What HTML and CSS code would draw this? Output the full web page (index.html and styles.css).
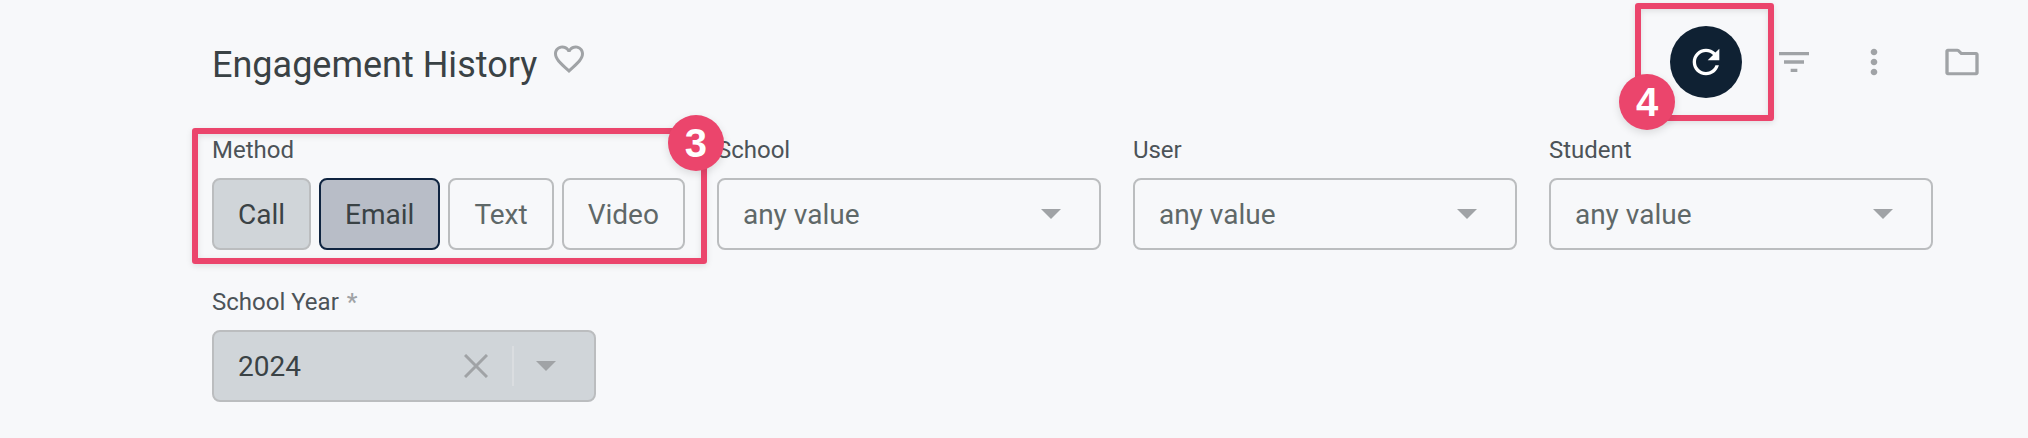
FILE: index.html
```html
<!DOCTYPE html>
<html lang="en">
<head>
  <meta charset="UTF-8">
  <meta name="viewport" content="width=device-width, initial-scale=1">
  <title>Engagement History</title>
  <link rel="stylesheet" href="styles.css">
</head>
<body>

<header class="page-header">
  <div class="title">
    <h1>Engagement History</h1>
    <button class="favorite" type="button" aria-label="Add to favorites">
      <svg viewBox="0 0 24 24"><path d="M16.500 3c-1.740 0-3.410.81-4.500 2.090C10.910 3.810 9.240 3 7.500 3 4.420 3 2 5.420 2 8.500c0 3.780 3.400 6.860 8.550 11.540L12 21.350l1.450-1.320C18.600 15.360 22 12.280 22 8.500 22 5.420 19.580 3 16.500 3zm-4.400 15.550l-.1.100-.1-.1C7.140 14.240 4 11.390 4 8.500 4 6.500 5.500 5 7.500 5c1.540 0 3.040.99 3.570 2.360h1.870C13.460 5.990 14.960 5 16.500 5c2 0 3.500 1.500 3.500 3.500 0 2.890-3.140 5.740-7.900 10.050z"/></svg>
    </button>
  </div>

  <div class="toolbar">
    <div class="step-area step-refresh">
      <button class="icon-button refresh" type="button" aria-label="Refresh">
        <svg viewBox="0 0 24 24"><path d="M17.650 6.350C16.200 4.900 14.210 4 12 4c-4.420 0-7.990 3.580-7.990 8s3.570 8 7.990 8c3.730 0 6.840-2.550 7.730-6h-2.080c-.82 2.330-3.040 4-5.650 4-3.310 0-6-2.690-6-6s2.690-6 6-6c1.660 0 3.140.69 4.220 1.780L13 11h7V4l-2.350 2.350z"/></svg>
      </button>
      <span class="step-frame"></span>
      <span class="step-number">4</span>
    </div>
    <button class="icon-button filter" type="button" aria-label="Filters">
      <svg viewBox="0 0 24 24"><path d="M10 18h4v-2h-4v2zM3 6v2h18V6H3zm3 7h12v-2H6v2z"/></svg>
    </button>
    <button class="icon-button more" type="button" aria-label="More actions">
      <svg viewBox="0 0 24 24"><path d="M12 8c1.100 0 2-.9 2-2s-.9-2-2-2-2 .9-2 2 .9 2 2 2zm0 2c-1.100 0-2 .9-2 2s.9 2 2 2 2-.9 2-2-.9-2-2-2zm0 6c-1.100 0-2 .9-2 2s.9 2 2 2 2-.9 2-2-.9-2-2-2z"/></svg>
    </button>
    <button class="icon-button folder" type="button" aria-label="Open folder">
      <svg viewBox="0 0 24 24"><path d="M3.500 4C2.700 4 2 4.700 2 5.500v13c0 .8.700 1.500 1.500 1.500h17c.8 0 1.500-.7 1.500-1.500v-11c0-.8-.7-1.500-1.500-1.500H12l-1.700-1.600C10 4.100 9.600 4 9.200 4H3.500zM4 5.800h5.200l2 2H20v10.400H4V5.800z"/></svg>
    </button>
  </div>
</header>

<main class="filters">
  <div class="field step-area step-method" role="group" aria-labelledby="method-label">
    <span class="label" id="method-label">Method</span>
    <div class="options">
      <button class="option selected" type="button" aria-pressed="true">Call</button>
      <button class="option selected active" type="button" aria-pressed="true">Email</button>
      <button class="option" type="button" aria-pressed="false">Text</button>
      <button class="option" type="button" aria-pressed="false">Video</button>
    </div>
    <span class="step-frame"></span>
    <span class="step-number">3</span>
  </div>

  <div class="field">
    <label class="label" for="school">School</label>
    <div class="select">
      <select id="school"><option>any value</option></select>
      <svg class="caret" viewBox="0 0 20 10"><path d="M0 0h20L10 10z"/></svg>
    </div>
  </div>

  <div class="field">
    <label class="label" for="user">User</label>
    <div class="select">
      <select id="user"><option>any value</option></select>
      <svg class="caret" viewBox="0 0 20 10"><path d="M0 0h20L10 10z"/></svg>
    </div>
  </div>

  <div class="field">
    <label class="label" for="student">Student</label>
    <div class="select">
      <select id="student"><option>any value</option></select>
      <svg class="caret" viewBox="0 0 20 10"><path d="M0 0h20L10 10z"/></svg>
    </div>
  </div>

  <div class="field">
    <label class="label" for="year">School Year<span class="required">*</span></label>
    <div class="select filled">
      <select id="year"><option>2024</option></select>
      <button class="clear" type="button" aria-label="Clear school year">
        <svg viewBox="0 0 24 24"><path d="M1 1l22 22M23 1L1 23"/></svg>
      </button>
      <svg class="caret" viewBox="0 0 20 10"><path d="M0 0h20L10 10z"/></svg>
    </div>
  </div>
</main>

</body>
</html>
```

FILE: styles.css
```css
* {
  box-sizing: border-box;
}

body {
  margin: 0;
  padding: 26px 30px 32px 212px;
  background: #f7f8fa;
  color: #3a4245;
  font-family: Roboto, "Liberation Sans", sans-serif;
}

button,
select {
  margin: 0;
  padding: 0;
  border: none;
  background: none;
  font-family: inherit;
  cursor: pointer;
}

svg {
  display: block;
  fill: currentColor;
}

/* Header */

.page-header {
  display: flex;
  justify-content: space-between;
  align-items: flex-start;
  margin-bottom: 32px;
}

.title {
  display: flex;
  align-items: flex-start;
  gap: 14px;
  padding-top: 15px;
}

h1 {
  margin: 0;
  font-size: 36px;
  font-weight: 400;
  line-height: 48px;
}

.favorite {
  color: #a0a3a6;
}

.favorite svg {
  width: 36px;
  height: 36px;
}

.toolbar {
  display: flex;
}

.icon-button {
  display: flex;
  align-items: center;
  justify-content: center;
  width: 72px;
  height: 72px;
  border-radius: 50%;
  color: #a0a3a6;
}

.icon-button svg {
  width: 40px;
  height: 40px;
}

.refresh {
  background: #0f2133;
  color: #fff;
}

.filter,
.folder {
  margin-left: 16px;
}

.more {
  margin-left: 8px;
}

/* Filters */

.filters {
  display: flex;
  flex-wrap: wrap;
  gap: 32px;
}

.label {
  display: block;
  margin-bottom: 8px;
  color: #4c5358;
  font-size: 24px;
  line-height: 40px;
}

.required {
  margin-left: 8px;
  color: #a0a3a6;
  font-weight: 500;
}

.options {
  display: flex;
  gap: 8px;
}

.option {
  height: 72px;
  padding: 0 24px;
  border: 2px solid #bbbdbf;
  border-radius: 8px;
  color: #5f6868;
  font-size: 28px;
}

.option.selected {
  background: #d0d5d9;
  color: #3a4245;
}

.option.active {
  border-color: #0f2440;
  background: #b8bdc7;
}

.select {
  display: grid;
  grid-template-columns: 1fr 50px 100px;
  align-items: center;
  width: 384px;
  height: 72px;
}

.select select {
  grid-area: 1 / 1 / 2 / 4;
  width: 100%;
  height: 100%;
  padding: 0 24px;
  border: 2px solid #bbbdbf;
  border-radius: 8px;
  appearance: none;
  color: #5f6868;
  font-size: 28px;
}

.select.filled select {
  background: #d0d5d9;
  color: #3a4245;
}

.caret {
  grid-area: 1 / 3;
  justify-self: center;
  width: 20px;
  height: 10px;
  color: #a0a3a6;
  pointer-events: none;
}

.clear {
  display: flex;
  align-items: center;
  grid-area: 1 / 2 / 2 / 4;
  justify-self: start;
  width: 68px;
  height: 40px;
  padding-left: 18px;
  border-right: 2px solid #dadde0;
  color: #a0a3a6;
}

.clear svg {
  width: 24px;
  height: 24px;
  fill: none;
  stroke: currentColor;
  stroke-width: 3;
}

/* Numbered guide steps, drawn over the page */

.step-area {
  position: relative;
}

.step-frame {
  position: absolute;
  z-index: 1;
  border: 6px solid #eb456c;
  border-radius: 3px;
  box-shadow: 0 2px 6px rgba(0, 0, 0, 0.1), inset 0 2px 6px rgba(0, 0, 0, 0.1);
  pointer-events: none;
}

.step-number {
  position: absolute;
  z-index: 2;
  width: 56px;
  height: 56px;
  border-radius: 50%;
  background: #eb456c;
  box-shadow: 0 3px 8px rgba(0, 0, 0, 0.12);
  color: #fff;
  font-family: "Liberation Sans", sans-serif;
  font-size: 40px;
  font-weight: 700;
  line-height: 56px;
  text-align: center;
}

.step-method .step-frame {
  top: -2px;
  right: -22px;
  bottom: -14px;
  left: -20px;
}

.step-method .step-number {
  top: -15px;
  right: -39px;
}

.step-refresh .step-frame {
  top: -23px;
  right: -32px;
  bottom: -23px;
  left: -35px;
}

.step-refresh .step-number {
  bottom: -32px;
  left: -51px;
}
```
